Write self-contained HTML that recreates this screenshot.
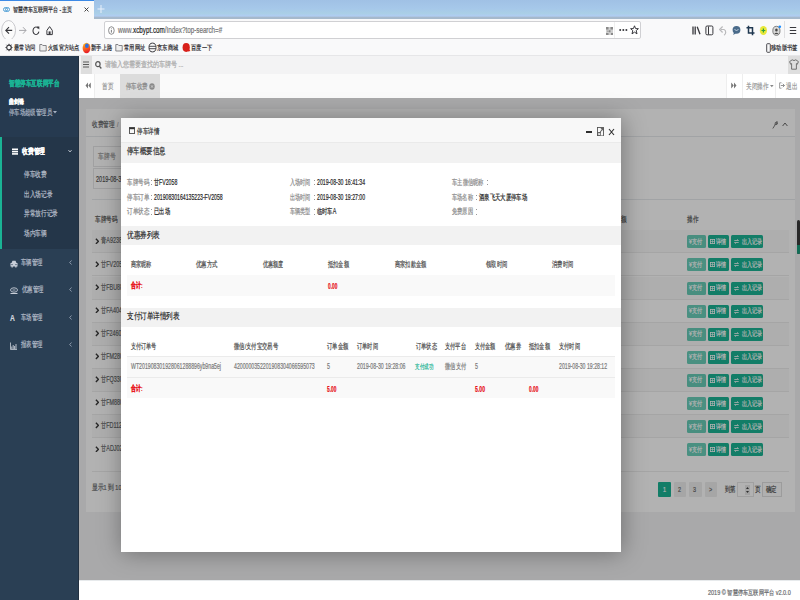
<!DOCTYPE html>
<html><head><meta charset="utf-8">
<style>
*{margin:0;padding:0;box-sizing:border-box}
html,body{width:800px;height:600px;overflow:hidden;background:#fff;font-family:"Liberation Sans",sans-serif}
.a{position:absolute}
.t{position:absolute;white-space:nowrap;-webkit-text-stroke:.2px currentColor;transform:scaleX(var(--s,.75));transform-origin:0 50%;line-height:12px;height:12px}
/* browser chrome */
#tabs{left:0;top:0;width:800px;height:18.6px;background:linear-gradient(#a0c1e5,#a6c8ea 45%,#aacfe6 70%,#b0cdf2 84%,#a6b9cc 92%,#a6b9cc)}
#tab{left:0;top:0;width:93.5px;height:18.6px;background:#f9f9fa;border-top:1px solid #3d8ae6}
#nav{left:0;top:18.6px;width:800px;height:20.4px;background:#f9f9fa}
#url{left:104px;top:21px;width:537px;height:18px;background:#fff;border:1px solid #d0d0d3;border-radius:2px}
#bm{left:0;top:39px;width:800px;height:16.7px;background:#f9f9fa;border-bottom:1px solid #e6e6e8}
/* app */
#side{left:0;top:55.7px;width:79.3px;height:545px;background:#2a3f54}
#sidehd{left:0;top:55.7px;width:79px;height:81.3px;background:#263a50}
#sideact{left:0;top:137px;width:79px;height:112px;background:#243649}
#sidebar-l{left:0;top:137px;width:2px;height:112px;background:#1ab394}
#hdr{left:79.3px;top:55.7px;width:720.7px;height:18.1px;background:#f3f3f4}
#ham{left:80.5px;top:55.7px;width:11.2px;height:18.1px;background:#dedede}
#shirt{left:788.3px;top:55.7px;width:11.7px;height:18.1px;background:#dedede}
#tabrow{left:79.3px;top:73.8px;width:720.7px;height:24.4px;background:#fafafa}
#content{left:79.3px;top:98px;width:720.7px;height:482px;background:#f3f3f4}
#panel{left:86px;top:109px;width:709px;height:403px;background:#fff}
#footer{left:79.3px;top:580px;width:720.7px;height:20px;background:#fff;border-top:1px solid #e7eaec}
#shade{left:79.3px;top:98px;width:720.7px;height:482px;background:rgba(0,0,0,.3)}
#modal{left:121px;top:118px;width:500px;height:434px;background:#fff;box-shadow:1px 1px 22px rgba(0,0,0,.35)}
</style></head><body>
<div class="a" id="tabs"></div>
<div class="a" id="tab"></div>
<svg class="a" style="left:3px;top:6px" width="7" height="7" viewBox="0 0 7 7"><circle cx="2.5" cy="3.5" r="2" fill="none" stroke="#4f9fd6" stroke-width="1"/><circle cx="4.5" cy="3.5" r="2" fill="none" stroke="#4f9fd6" stroke-width="1"/></svg>
<div class="t" style="left:13px;top:3.7px;font-size:6.9px;--s:.715;color:#2a2a2e">智慧停车互联网平台 - 主页</div>
<svg class="a" style="left:84px;top:7px" width="5" height="5" viewBox="0 0 5 5"><path d="M0.5 0.5L4.5 4.5M4.5 0.5L0.5 4.5" stroke="#333" stroke-width="0.9"/></svg>
<svg class="a" style="left:97px;top:4px" width="8" height="10" viewBox="0 0 8 10"><path d="M4 1V9M0.5 5H7.5" stroke="#e8f0fa" stroke-width="1"/></svg>
<div class="a" id="nav"></div>
<svg class="a" style="left:1px;top:20px" width="16" height="21" viewBox="0 0 16 21"><ellipse cx="7.6" cy="10.3" rx="6.9" ry="9.8" fill="#fbfbfb" stroke="#c2c2c6" stroke-width="0.9"/><path d="M4.8 10.4H11.2M8 7.2L4.8 10.4L8 13.7" fill="none" stroke="#38383d" stroke-width="1.1"/></svg>
<svg class="a" style="left:18px;top:25px" width="9" height="11" viewBox="0 0 9 11"><path d="M1 5.4H8M5 2.2L8 5.4L5 8.7" fill="none" stroke="#a6a6aa" stroke-width="1"/></svg>
<svg class="a" style="left:32px;top:25px" width="8" height="11" viewBox="0 0 8 11"><path d="M6.3 3.4A3 3.7 0 1 0 6.9 6.6" fill="none" stroke="#38383d" stroke-width="1.05"/><path d="M4.6 1.6L7.3 1.6L7.3 4.6Z" fill="#38383d"/></svg>
<svg class="a" style="left:45.5px;top:25px" width="8" height="11" viewBox="0 0 8 11"><path d="M0.9 5.4L3.6 1.6L6.3 5.4V9.6H0.9Z" fill="none" stroke="#38383d" stroke-width="1"/><rect x="2.6" y="6.4" width="2" height="3.2" fill="#38383d"/></svg>
<div class="a" id="url"></div>
<svg class="a" style="left:108px;top:26px" width="7" height="9" viewBox="0 0 7 9"><ellipse cx="3.4" cy="4.5" rx="2.8" ry="3.8" fill="none" stroke="#5b5b5f" stroke-width="0.7"/><path d="M3.4 3.8V6.6" stroke="#5b5b5f" stroke-width="0.8"/><circle cx="3.4" cy="2.6" r="0.45" fill="#5b5b5f"/></svg>
<div class="t" style="left:117.5px;top:24.2px;font-size:9.6px;--s:.655;color:#737373">www.<span style="color:#1b1b1b">xcbypt.com</span>/Index?top-search=#</div>
<svg class="a" style="left:605.5px;top:26.5px" width="7" height="8.5" viewBox="0 0 7 8.5"><rect x="0" y="0" width="7" height="8.5" fill="#cfcfcf"/><path d="M0 0h2.5v2.5h-2.5zM4.5 0h2.5v2.5h-2.5zM0 6h2.5v2.5h-2.5zM3 3.2h1.5v2h-1.5zM5 6h2v2.5h-2zM1.5 3.5h1v1.5h-1z" fill="#8a8a8a"/></svg>
<div class="a" style="left:614px;top:22px;width:1px;height:16px;background:#f0f0f0"></div>
<svg class="a" style="left:619px;top:28px" width="9" height="4" viewBox="0 0 9 4"><circle cx="1.2" cy="2" r="1" fill="#38383d"/><circle cx="4.3" cy="2" r="1" fill="#38383d"/><circle cx="7.4" cy="2" r="1" fill="#38383d"/></svg>
<svg class="a" style="left:630px;top:25px" width="9" height="10" viewBox="0 0 9 10"><path d="M4.5 0.8L5.6 3.6L8.4 3.7L6.2 5.6L7 8.9L4.5 7.1L2 8.9L2.8 5.6L0.6 3.7L3.4 3.6Z" fill="none" stroke="#38383d" stroke-width="1"/></svg>
<!-- right toolbar icons -->
<svg class="a" style="left:692px;top:25px" width="9" height="11" viewBox="0 0 9 11"><path d="M1 1.5V9.5M3.2 1.5V9.5M5.2 1.8L8 9.3" stroke="#38383d" stroke-width="1.3" fill="none"/></svg>
<svg class="a" style="left:705px;top:25px" width="9" height="11" viewBox="0 0 9 11"><rect x="0.9" y="1" width="7" height="8.8" rx="1.2" fill="none" stroke="#38383d" stroke-width="1"/><path d="M3.5 1.5V9.5" stroke="#38383d" stroke-width="1"/></svg>
<svg class="a" style="left:719px;top:25px" width="9" height="11" viewBox="0 0 9 11"><path d="M2 4.5H5A2.5 3 0 0 1 5 10.2" fill="none" stroke="#b9b9bb" stroke-width="1.2"/><path d="M3.6 1.5L0.6 4.5L3.6 7.5" fill="none" stroke="#b9b9bb" stroke-width="1.2"/></svg>
<svg class="a" style="left:732px;top:25px" width="9" height="11" viewBox="0 0 9 11"><ellipse cx="4.5" cy="4.8" rx="3.9" ry="3.9" fill="#4a6b8a"/><path d="M2 7.5L1.2 10L4 8.2Z" fill="#4a6b8a"/><path d="M2.5 4.5Q4.5 6.5 6.5 4.5" stroke="#d6e2ee" stroke-width="0.8" fill="none"/></svg>
<svg class="a" style="left:746px;top:25px" width="9" height="11" viewBox="0 0 9 11"><path d="M2.5 0.8V8H8.5M0.5 2.8H6.5V10.2" fill="none" stroke="#203850" stroke-width="1.5"/></svg>
<svg class="a" style="left:759px;top:25px" width="9" height="11" viewBox="0 0 9 11"><ellipse cx="4.4" cy="5.5" rx="3.6" ry="4.6" fill="#e8e83a"/><path d="M2.5 5.5H6.3M4.4 3.5V7.5" stroke="#2aa040" stroke-width="1.2"/></svg>
<svg class="a" style="left:772px;top:25px" width="10" height="11" viewBox="0 0 10 11"><ellipse cx="4.4" cy="5.8" rx="3.6" ry="4.5" fill="#d9d9d9" stroke="#6a6a6a" stroke-width="0.8"/><ellipse cx="4.4" cy="5" rx="1.3" ry="1.6" fill="#444"/><path d="M2.2 9Q4.4 6.5 6.6 9" fill="#444"/><circle cx="7.8" cy="1.8" r="1.3" fill="#1a8cff"/></svg>
<div class="a" style="left:784px;top:21px;width:1px;height:17px;background:#e0e0e2"></div>
<svg class="a" style="left:789px;top:25px" width="8" height="11" viewBox="0 0 8 11"><path d="M0.8 2.5H7.2M0.8 5.5H7.2M0.8 8.5H7.2" stroke="#38383d" stroke-width="1.1"/></svg>
<div class="a" id="bm"></div>
<svg class="a" style="left:5px;top:43px" width="8" height="9" viewBox="0 0 8 9"><circle cx="4" cy="4.5" r="2.3" fill="none" stroke="#38383d" stroke-width="1.2"/><path d="M4 0.8V2M4 7V8.2M0.5 4.5H1.6M6.4 4.5H7.5M1.5 1.8L2.3 2.6M5.7 6.4L6.5 7.2M6.5 1.8L5.7 2.6M2.3 6.4L1.5 7.2" stroke="#38383d" stroke-width="1"/></svg>
<div class="t" style="left:14px;top:42.3px;font-size:6.8px;color:#2a2a2e">最常访问</div>
<svg class="a" style="left:39px;top:43px" width="8" height="9" viewBox="0 0 8 9"><path d="M0.8 1.5H3L3.8 2.5H7.2V8H0.8Z" fill="#eee" stroke="#6a6a6e" stroke-width="0.8"/></svg>
<div class="t" style="left:48px;top:42.3px;font-size:6.8px;color:#2a2a2e">火狐官方站点</div>
<svg class="a" style="left:81.5px;top:41.5px" width="9" height="12" viewBox="0 0 9 12"><defs><linearGradient id="ff" x1="0" y1="0" x2="0.3" y2="1"><stop offset="0" stop-color="#ffcb2e"/><stop offset="0.45" stop-color="#ff7a1a"/><stop offset="1" stop-color="#e8202a"/></linearGradient></defs><ellipse cx="4.5" cy="6" rx="3.9" ry="5.3" fill="url(#ff)"/><ellipse cx="4.9" cy="3.8" rx="1.9" ry="2.3" fill="#2f6fe0"/></svg>
<div class="t" style="left:91px;top:42.3px;font-size:6.8px;color:#2a2a2e">新手上路</div>
<svg class="a" style="left:115px;top:43px" width="8" height="9" viewBox="0 0 8 9"><path d="M0.8 1.5H3L3.8 2.5H7.2V8H0.8Z" fill="#eee" stroke="#6a6a6e" stroke-width="0.8"/></svg>
<div class="t" style="left:124px;top:42.3px;font-size:6.8px;color:#2a2a2e">常用网址</div>
<svg class="a" style="left:148px;top:42px" width="9" height="11" viewBox="0 0 9 11"><ellipse cx="4.5" cy="5.5" rx="3.5" ry="4.4" fill="none" stroke="#38383d" stroke-width="1"/><path d="M1.2 4.3H7.8M1.2 6.7H7.8" stroke="#38383d" stroke-width="0.9"/></svg>
<div class="t" style="left:157px;top:42.3px;font-size:6.8px;color:#2a2a2e">京东商城</div>
<svg class="a" style="left:182px;top:42px" width="9" height="11" viewBox="0 0 9 11"><ellipse cx="4.2" cy="5.5" rx="3.6" ry="4.4" fill="#d8201a"/><path d="M5.5 5.5L8.5 9L6 9.5Z" fill="#d8201a"/></svg>
<div class="t" style="left:191px;top:42.3px;font-size:6.8px;color:#2a2a2e">百度一下</div>
<svg class="a" style="left:766px;top:43px" width="5" height="10" viewBox="0 0 5 10"><rect x="0.7" y="0.7" width="3.6" height="8.6" rx="0.8" fill="none" stroke="#38383d" stroke-width="0.9"/></svg>
<div class="t" style="left:771px;top:42.3px;font-size:6.8px;color:#2a2a2e">移动版书签</div>

<div class="a" id="side"></div>
<div class="a" id="sidehd"></div>
<div class="a" id="sideact"></div>
<div class="a" id="sidebar-l"></div>
<div class="a" style="left:78.4px;top:55.7px;width:0.9px;height:545px;background:#223040"></div>
<div class="t" style="left:8.7px;top:77px;font-size:8.4px;--s:.70;color:#1ab394;font-weight:bold">智慧停车互联网平台</div>
<div class="t" style="left:8.8px;top:96px;font-size:7.4px;--s:.7;color:#fff;font-weight:bold">曲剑锋</div>
<div class="t" style="left:9px;top:106.5px;font-size:7.6px;--s:.67;color:#aab4c2">停车场超级管理员</div>
<svg class="a" style="left:53.2px;top:111px" width="4" height="3" viewBox="0 0 4 3"><path d="M0 0H4L2 2.5Z" fill="#a7b1c2"/></svg>
<svg class="a" style="left:12px;top:148px" width="6" height="7" viewBox="0 0 6 7"><rect x="0" y="0.5" width="6" height="1.6" fill="#fff"/><rect x="0" y="2.8" width="6" height="1.6" fill="#fff"/><rect x="0" y="5.1" width="6" height="1.6" fill="#fff"/></svg>
<div class="t" style="left:22px;top:145.5px;font-size:7.6px;--s:.72;color:#fff;font-weight:bold">收费管理</div>
<svg class="a" style="left:68px;top:149px" width="4" height="4" viewBox="0 0 4 4"><path d="M0.4 1L2 3L3.6 1" fill="none" stroke="#d0d6de" stroke-width="0.8"/></svg>
<div class="t" style="left:24px;top:169px;font-size:7.6px;--s:.71;color:#b4bcc8">停车收费</div>
<div class="t" style="left:24px;top:189px;font-size:7.6px;--s:.71;color:#b4bcc8">出入场记录</div>
<div class="t" style="left:24px;top:208px;font-size:7.6px;--s:.71;color:#b4bcc8">异常放行记录</div>
<div class="t" style="left:24px;top:228px;font-size:7.6px;--s:.71;color:#b4bcc8">场内车辆</div>
<svg class="a" style="left:10px;top:260px" width="8" height="8" viewBox="0 0 8 8"><path d="M1.5 3L2.5 0.8H5.5L6.5 3H7.5V6.5H6.5V7.5H5.2V6.5H2.8V7.5H1.5V6.5H0.5V3Z" fill="#c8ced8"/><circle cx="2" cy="4.6" r="0.7" fill="#2c3f56"/><circle cx="6" cy="4.6" r="0.7" fill="#2c3f56"/></svg>
<div class="t" style="left:21px;top:257px;font-size:7.6px;--s:.67;color:#b4bcc8">车辆管理</div>
<svg class="a" style="left:69px;top:260px" width="3" height="5" viewBox="0 0 3 5"><path d="M2.5 0.5L0.7 2.5L2.5 4.5" fill="none" stroke="#a7b1c2" stroke-width="0.8"/></svg>
<svg class="a" style="left:10px;top:287px" width="8" height="8" viewBox="0 0 8 8"><ellipse cx="4" cy="3" rx="3.5" ry="2.2" fill="none" stroke="#c8ced8" stroke-width="0.9"/><path d="M0.5 6.5H7.5" stroke="#c8ced8" stroke-width="1"/><path d="M2.5 3H5.5" stroke="#c8ced8" stroke-width="0.8"/></svg>
<div class="t" style="left:22px;top:284px;font-size:7.6px;--s:.67;color:#b4bcc8">优惠管理</div>
<svg class="a" style="left:69px;top:287px" width="3" height="5" viewBox="0 0 3 5"><path d="M2.5 0.5L0.7 2.5L2.5 4.5" fill="none" stroke="#a7b1c2" stroke-width="0.8"/></svg>
<div class="t" style="left:10px;top:312px;font-size:8.4px;--s:.8;color:#d0d6de;font-weight:bold">A</div>
<div class="t" style="left:21px;top:312px;font-size:7.6px;--s:.67;color:#b4bcc8">车场管理</div>
<svg class="a" style="left:69px;top:315px" width="3" height="5" viewBox="0 0 3 5"><path d="M2.5 0.5L0.7 2.5L2.5 4.5" fill="none" stroke="#a7b1c2" stroke-width="0.8"/></svg>
<svg class="a" style="left:10px;top:342px" width="7" height="8" viewBox="0 0 7 8"><path d="M0.5 0.5V7.5H7" fill="none" stroke="#c8ced8" stroke-width="0.8"/><path d="M1.8 7V4.5M3.2 7V3M4.6 7V4M6 7V2" stroke="#c8ced8" stroke-width="0.9"/></svg>
<div class="t" style="left:21px;top:339px;font-size:7.6px;--s:.67;color:#b4bcc8">报表管理</div>
<svg class="a" style="left:69px;top:342px" width="3" height="5" viewBox="0 0 3 5"><path d="M2.5 0.5L0.7 2.5L2.5 4.5" fill="none" stroke="#a7b1c2" stroke-width="0.8"/></svg>
<div class="a" id="hdr"></div>
<div class="a" id="ham"></div>
<svg class="a" style="left:83px;top:61px" width="6" height="7" viewBox="0 0 6 7"><path d="M0 1H6M0 3.5H6M0 6H6" stroke="#5a5a5a" stroke-width="1.1"/></svg>
<svg class="a" style="left:95px;top:61px" width="7" height="8" viewBox="0 0 7 8"><ellipse cx="2.9" cy="3.2" rx="2.2" ry="2.5" fill="none" stroke="#555" stroke-width="1.2"/><path d="M4.4 5.2L6.3 7.5" stroke="#555" stroke-width="1.3"/></svg>
<div class="t" style="left:105px;top:59px;font-size:7.6px;color:#a9a9a9">请输入您需要查找的车牌号 ...</div>
<div class="a" id="shirt"></div>
<svg class="a" style="left:789px;top:59px" width="10" height="11" viewBox="0 0 10 11"><path d="M3.2 0.8L0.6 2.6L1.6 5.2L2.6 4.6V10.2H7.4V4.6L8.4 5.2L9.4 2.6L6.8 0.8Q5 2.4 3.2 0.8Z" fill="none" stroke="#555" stroke-width="0.8"/></svg>
<div class="a" id="tabrow"></div>
<div class="a" style="left:80px;top:74px;width:15px;height:24px;background:#fff;border-right:1px solid #eee"></div>
<svg class="a" style="left:84.5px;top:82px" width="6" height="7" viewBox="0 0 6 7"><path d="M3 0.5L0.5 3.5L3 6.5V0.5ZM5.8 0.5L3.3 3.5L5.8 6.5Z" fill="#777"/></svg>
<div class="t" style="left:102px;top:80.8px;font-size:7.6px;--s:.70;color:#999">首页</div>
<div class="a" style="left:120px;top:74px;width:40px;height:24px;background:#dcdcdc"></div>
<div class="t" style="left:126px;top:80.8px;font-size:7.6px;--s:.68;color:#888">停车收费</div>
<svg class="a" style="left:149.3px;top:82.6px" width="6" height="7" viewBox="0 0 6 7"><ellipse cx="3" cy="3.5" rx="2.7" ry="3.2" fill="#8a8a8a"/><path d="M2 2.3L4 4.7M4 2.3L2 4.7" stroke="#dcdcdc" stroke-width="0.7"/></svg>
<div class="a" style="left:726px;top:74px;width:16px;height:24px;background:#fff;border-left:1px solid #eee"></div>
<svg class="a" style="left:731px;top:82px" width="6" height="7" viewBox="0 0 6 7"><path d="M0.2 0.5L2.7 3.5L0.2 6.5ZM3 0.5L5.5 3.5L3 6.5Z" fill="#777"/></svg>
<div class="a" style="left:742px;top:74px;width:33px;height:24px;background:#fff;border-left:1px solid #eee"></div>
<div class="t" style="left:746px;top:80.8px;font-size:7.6px;--s:.70;color:#999">关闭操作</div>
<svg class="a" style="left:769.5px;top:85px" width="4" height="3" viewBox="0 0 4 3"><path d="M0 0H3.6L1.8 2.2Z" fill="#888"/></svg>
<div class="a" style="left:775px;top:74px;width:25px;height:24px;background:#fff;border-left:1px solid #eee"></div>
<svg class="a" style="left:779px;top:82px" width="6" height="7" viewBox="0 0 6 7"><path d="M2.5 0.8H0.6V6.2H2.5" fill="none" stroke="#888" stroke-width="0.8"/><path d="M1.8 3.5H5.5M3.8 1.8L5.5 3.5L3.8 5.2" fill="none" stroke="#888" stroke-width="0.9"/></svg>
<div class="t" style="left:786px;top:80.8px;font-size:7.6px;--s:.70;color:#999">退出</div>
<div class="a" id="content"></div>
<div class="a" id="panel"></div>
<div class="a" style="left:86px;top:135.5px;width:709px;height:1px;background:#e7eaec"></div>
<div class="t" style="left:92px;top:118.60px;font-size:7.6px;--s:0.7;color:#676a6c">收费管理</div>
<div class="t" style="left:117.3px;top:118.60px;font-size:7.6px;--s:0.7;color:#aaa">/</div>
<svg class="a" style="left:772px;top:120.5px" width="6" height="8" viewBox="0 0 6 8"><path d="M0.8 7.5L3.5 3.2M3 3.8Q2.6 1 5.2 0.6Q4 1.8 4.6 2.6Q5.4 2.2 5.6 1.6Q5.6 4 3.5 3.6" fill="none" stroke="#6a6a6a" stroke-width="0.9"/></svg>
<svg class="a" style="left:782px;top:122px" width="6" height="5" viewBox="0 0 6 5"><path d="M0.6 4L3 1L5.4 4" fill="none" stroke="#6a6a6a" stroke-width="1"/></svg>
<div class="a" style="left:92.5px;top:146px;width:100px;height:21px;background:#fff;border:1px solid #e5e6e7"></div>
<div class="t" style="left:98px;top:150.50px;font-size:7.6px;--s:0.72;color:#999">车牌号</div>
<div class="a" style="left:92.5px;top:168px;width:100px;height:20.5px;background:#fff;border:1px solid #e5e6e7"></div>
<div class="t" style="left:96px;top:172.80px;font-size:8.4px;--s:0.66;color:#555">2019-08-30</div>
<div class="a" style="left:92px;top:199.2px;width:702.5px;height:1px;background:#e7eaec"></div>
<div class="t" style="left:95px;top:214.20px;font-size:7.6px;--s:0.7;color:#555">车牌号码</div>
<div class="t" style="left:604px;top:214.20px;font-size:7.6px;--s:0.7;color:#555">优惠金额</div>
<div class="t" style="left:687px;top:214.20px;font-size:7.6px;--s:0.7;color:#555">操作</div>
<div class="a" style="left:92px;top:229.5px;width:697px;height:1px;background:#e9e9e9"></div>
<div class="a" style="left:92px;top:230.3px;width:697px;height:23.1px;background:#f9f9f9;border-bottom:1px solid #ececec"></div>
<svg class="a" style="left:94.6px;top:237.6px" width="4.5" height="6.6" viewBox="0 0 4.5 6.6"><path d="M0.9 0.7L3.4 3.3L0.9 5.9" fill="none" stroke="#3a3a3a" stroke-width="1.4"/></svg>
<div class="t" style="left:101.3px;top:235.40px;font-size:8.2px;--s:0.66;color:#676a6c">青A92388</div>
<div class="a" style="left:687.3px;top:235.3px;width:18.6px;height:13px;background:#1ab394;opacity:.65;border-radius:1.5px"></div>
<div class="t" style="left:689px;top:235.80px;font-size:7px;--s:0.72;color:#fff">¥支付</div>
<div class="a" style="left:707.9px;top:235.3px;width:21px;height:13px;background:#1ab394;border-radius:1.5px"></div>
<svg class="a" style="left:710px;top:239.3px" width="5" height="5" viewBox="0 0 5 5"><rect x="0.4" y="0.4" width="4.2" height="4.2" fill="none" stroke="#fff" stroke-width="0.8"/><path d="M0.4 2.5H4.6M2.5 0.4V4.6" stroke="#fff" stroke-width="0.6"/></svg>
<div class="t" style="left:715.5px;top:235.80px;font-size:7px;--s:0.72;color:#fff">详情</div>
<div class="a" style="left:730.8px;top:235.3px;width:32.2px;height:13px;background:#1ab394;border-radius:1.5px"></div>
<svg class="a" style="left:733.5px;top:239.3px" width="5" height="5" viewBox="0 0 5 5"><path d="M0.3 1.5H4.5M3.2 0.3L4.5 1.5M4.7 3.5H0.5M1.8 4.7L0.5 3.5" fill="none" stroke="#fff" stroke-width="0.8"/></svg>
<div class="t" style="left:742px;top:235.80px;font-size:7px;--s:0.72;color:#fff">出入记录</div>
<div class="a" style="left:92px;top:253.4px;width:697px;height:23.1px;background:#fff;border-bottom:1px solid #ececec"></div>
<svg class="a" style="left:94.6px;top:260.7px" width="4.5" height="6.6" viewBox="0 0 4.5 6.6"><path d="M0.9 0.7L3.4 3.3L0.9 5.9" fill="none" stroke="#3a3a3a" stroke-width="1.4"/></svg>
<div class="t" style="left:101.3px;top:258.50px;font-size:8.2px;--s:0.66;color:#676a6c">甘FV2058</div>
<div class="a" style="left:687.3px;top:258.4px;width:18.6px;height:13px;background:#1ab394;opacity:.65;border-radius:1.5px"></div>
<div class="t" style="left:689px;top:258.90px;font-size:7px;--s:0.72;color:#fff">¥支付</div>
<div class="a" style="left:707.9px;top:258.4px;width:21px;height:13px;background:#1ab394;border-radius:1.5px"></div>
<svg class="a" style="left:710px;top:262.4px" width="5" height="5" viewBox="0 0 5 5"><rect x="0.4" y="0.4" width="4.2" height="4.2" fill="none" stroke="#fff" stroke-width="0.8"/><path d="M0.4 2.5H4.6M2.5 0.4V4.6" stroke="#fff" stroke-width="0.6"/></svg>
<div class="t" style="left:715.5px;top:258.90px;font-size:7px;--s:0.72;color:#fff">详情</div>
<div class="a" style="left:730.8px;top:258.4px;width:32.2px;height:13px;background:#1ab394;border-radius:1.5px"></div>
<svg class="a" style="left:733.5px;top:262.4px" width="5" height="5" viewBox="0 0 5 5"><path d="M0.3 1.5H4.5M3.2 0.3L4.5 1.5M4.7 3.5H0.5M1.8 4.7L0.5 3.5" fill="none" stroke="#fff" stroke-width="0.8"/></svg>
<div class="t" style="left:742px;top:258.90px;font-size:7px;--s:0.72;color:#fff">出入记录</div>
<div class="a" style="left:92px;top:276.5px;width:697px;height:23.1px;background:#f9f9f9;border-bottom:1px solid #ececec"></div>
<svg class="a" style="left:94.6px;top:283.8px" width="4.5" height="6.6" viewBox="0 0 4.5 6.6"><path d="M0.9 0.7L3.4 3.3L0.9 5.9" fill="none" stroke="#3a3a3a" stroke-width="1.4"/></svg>
<div class="t" style="left:101.3px;top:281.60px;font-size:8.2px;--s:0.66;color:#676a6c">甘FBU888</div>
<div class="a" style="left:687.3px;top:281.5px;width:18.6px;height:13px;background:#1ab394;opacity:.65;border-radius:1.5px"></div>
<div class="t" style="left:689px;top:282.00px;font-size:7px;--s:0.72;color:#fff">¥支付</div>
<div class="a" style="left:707.9px;top:281.5px;width:21px;height:13px;background:#1ab394;border-radius:1.5px"></div>
<svg class="a" style="left:710px;top:285.5px" width="5" height="5" viewBox="0 0 5 5"><rect x="0.4" y="0.4" width="4.2" height="4.2" fill="none" stroke="#fff" stroke-width="0.8"/><path d="M0.4 2.5H4.6M2.5 0.4V4.6" stroke="#fff" stroke-width="0.6"/></svg>
<div class="t" style="left:715.5px;top:282.00px;font-size:7px;--s:0.72;color:#fff">详情</div>
<div class="a" style="left:730.8px;top:281.5px;width:32.2px;height:13px;background:#1ab394;border-radius:1.5px"></div>
<svg class="a" style="left:733.5px;top:285.5px" width="5" height="5" viewBox="0 0 5 5"><path d="M0.3 1.5H4.5M3.2 0.3L4.5 1.5M4.7 3.5H0.5M1.8 4.7L0.5 3.5" fill="none" stroke="#fff" stroke-width="0.8"/></svg>
<div class="t" style="left:742px;top:282.00px;font-size:7px;--s:0.72;color:#fff">出入记录</div>
<div class="a" style="left:92px;top:299.6px;width:697px;height:23.1px;background:#fff;border-bottom:1px solid #ececec"></div>
<svg class="a" style="left:94.6px;top:306.9px" width="4.5" height="6.6" viewBox="0 0 4.5 6.6"><path d="M0.9 0.7L3.4 3.3L0.9 5.9" fill="none" stroke="#3a3a3a" stroke-width="1.4"/></svg>
<div class="t" style="left:101.3px;top:304.70px;font-size:8.2px;--s:0.66;color:#676a6c">甘FA4040</div>
<div class="a" style="left:687.3px;top:304.6px;width:18.6px;height:13px;background:#1ab394;opacity:.65;border-radius:1.5px"></div>
<div class="t" style="left:689px;top:305.10px;font-size:7px;--s:0.72;color:#fff">¥支付</div>
<div class="a" style="left:707.9px;top:304.6px;width:21px;height:13px;background:#1ab394;border-radius:1.5px"></div>
<svg class="a" style="left:710px;top:308.6px" width="5" height="5" viewBox="0 0 5 5"><rect x="0.4" y="0.4" width="4.2" height="4.2" fill="none" stroke="#fff" stroke-width="0.8"/><path d="M0.4 2.5H4.6M2.5 0.4V4.6" stroke="#fff" stroke-width="0.6"/></svg>
<div class="t" style="left:715.5px;top:305.10px;font-size:7px;--s:0.72;color:#fff">详情</div>
<div class="a" style="left:730.8px;top:304.6px;width:32.2px;height:13px;background:#1ab394;border-radius:1.5px"></div>
<svg class="a" style="left:733.5px;top:308.6px" width="5" height="5" viewBox="0 0 5 5"><path d="M0.3 1.5H4.5M3.2 0.3L4.5 1.5M4.7 3.5H0.5M1.8 4.7L0.5 3.5" fill="none" stroke="#fff" stroke-width="0.8"/></svg>
<div class="t" style="left:742px;top:305.10px;font-size:7px;--s:0.72;color:#fff">出入记录</div>
<div class="a" style="left:92px;top:322.7px;width:697px;height:23.1px;background:#f9f9f9;border-bottom:1px solid #ececec"></div>
<svg class="a" style="left:94.6px;top:330.0px" width="4.5" height="6.6" viewBox="0 0 4.5 6.6"><path d="M0.9 0.7L3.4 3.3L0.9 5.9" fill="none" stroke="#3a3a3a" stroke-width="1.4"/></svg>
<div class="t" style="left:101.3px;top:327.80px;font-size:8.2px;--s:0.66;color:#676a6c">甘F24600</div>
<div class="a" style="left:687.3px;top:327.7px;width:18.6px;height:13px;background:#1ab394;opacity:.65;border-radius:1.5px"></div>
<div class="t" style="left:689px;top:328.20px;font-size:7px;--s:0.72;color:#fff">¥支付</div>
<div class="a" style="left:707.9px;top:327.7px;width:21px;height:13px;background:#1ab394;border-radius:1.5px"></div>
<svg class="a" style="left:710px;top:331.7px" width="5" height="5" viewBox="0 0 5 5"><rect x="0.4" y="0.4" width="4.2" height="4.2" fill="none" stroke="#fff" stroke-width="0.8"/><path d="M0.4 2.5H4.6M2.5 0.4V4.6" stroke="#fff" stroke-width="0.6"/></svg>
<div class="t" style="left:715.5px;top:328.20px;font-size:7px;--s:0.72;color:#fff">详情</div>
<div class="a" style="left:730.8px;top:327.7px;width:32.2px;height:13px;background:#1ab394;border-radius:1.5px"></div>
<svg class="a" style="left:733.5px;top:331.7px" width="5" height="5" viewBox="0 0 5 5"><path d="M0.3 1.5H4.5M3.2 0.3L4.5 1.5M4.7 3.5H0.5M1.8 4.7L0.5 3.5" fill="none" stroke="#fff" stroke-width="0.8"/></svg>
<div class="t" style="left:742px;top:328.20px;font-size:7px;--s:0.72;color:#fff">出入记录</div>
<div class="a" style="left:92px;top:345.8px;width:697px;height:23.1px;background:#fff;border-bottom:1px solid #ececec"></div>
<svg class="a" style="left:94.6px;top:353.1px" width="4.5" height="6.6" viewBox="0 0 4.5 6.6"><path d="M0.9 0.7L3.4 3.3L0.9 5.9" fill="none" stroke="#3a3a3a" stroke-width="1.4"/></svg>
<div class="t" style="left:101.3px;top:350.90px;font-size:8.2px;--s:0.66;color:#676a6c">甘FM2800</div>
<div class="a" style="left:687.3px;top:350.8px;width:18.6px;height:13px;background:#1ab394;opacity:.65;border-radius:1.5px"></div>
<div class="t" style="left:689px;top:351.30px;font-size:7px;--s:0.72;color:#fff">¥支付</div>
<div class="a" style="left:707.9px;top:350.8px;width:21px;height:13px;background:#1ab394;border-radius:1.5px"></div>
<svg class="a" style="left:710px;top:354.8px" width="5" height="5" viewBox="0 0 5 5"><rect x="0.4" y="0.4" width="4.2" height="4.2" fill="none" stroke="#fff" stroke-width="0.8"/><path d="M0.4 2.5H4.6M2.5 0.4V4.6" stroke="#fff" stroke-width="0.6"/></svg>
<div class="t" style="left:715.5px;top:351.30px;font-size:7px;--s:0.72;color:#fff">详情</div>
<div class="a" style="left:730.8px;top:350.8px;width:32.2px;height:13px;background:#1ab394;border-radius:1.5px"></div>
<svg class="a" style="left:733.5px;top:354.8px" width="5" height="5" viewBox="0 0 5 5"><path d="M0.3 1.5H4.5M3.2 0.3L4.5 1.5M4.7 3.5H0.5M1.8 4.7L0.5 3.5" fill="none" stroke="#fff" stroke-width="0.8"/></svg>
<div class="t" style="left:742px;top:351.30px;font-size:7px;--s:0.72;color:#fff">出入记录</div>
<div class="a" style="left:92px;top:368.9px;width:697px;height:23.1px;background:#f9f9f9;border-bottom:1px solid #ececec"></div>
<svg class="a" style="left:94.6px;top:376.2px" width="4.5" height="6.6" viewBox="0 0 4.5 6.6"><path d="M0.9 0.7L3.4 3.3L0.9 5.9" fill="none" stroke="#3a3a3a" stroke-width="1.4"/></svg>
<div class="t" style="left:101.3px;top:374.00px;font-size:8.2px;--s:0.66;color:#676a6c">甘FQ3300</div>
<div class="a" style="left:687.3px;top:373.9px;width:18.6px;height:13px;background:#1ab394;opacity:.65;border-radius:1.5px"></div>
<div class="t" style="left:689px;top:374.40px;font-size:7px;--s:0.72;color:#fff">¥支付</div>
<div class="a" style="left:707.9px;top:373.9px;width:21px;height:13px;background:#1ab394;border-radius:1.5px"></div>
<svg class="a" style="left:710px;top:377.9px" width="5" height="5" viewBox="0 0 5 5"><rect x="0.4" y="0.4" width="4.2" height="4.2" fill="none" stroke="#fff" stroke-width="0.8"/><path d="M0.4 2.5H4.6M2.5 0.4V4.6" stroke="#fff" stroke-width="0.6"/></svg>
<div class="t" style="left:715.5px;top:374.40px;font-size:7px;--s:0.72;color:#fff">详情</div>
<div class="a" style="left:730.8px;top:373.9px;width:32.2px;height:13px;background:#1ab394;border-radius:1.5px"></div>
<svg class="a" style="left:733.5px;top:377.9px" width="5" height="5" viewBox="0 0 5 5"><path d="M0.3 1.5H4.5M3.2 0.3L4.5 1.5M4.7 3.5H0.5M1.8 4.7L0.5 3.5" fill="none" stroke="#fff" stroke-width="0.8"/></svg>
<div class="t" style="left:742px;top:374.40px;font-size:7px;--s:0.72;color:#fff">出入记录</div>
<div class="a" style="left:92px;top:392.0px;width:697px;height:23.1px;background:#fff;border-bottom:1px solid #ececec"></div>
<svg class="a" style="left:94.6px;top:399.3px" width="4.5" height="6.6" viewBox="0 0 4.5 6.6"><path d="M0.9 0.7L3.4 3.3L0.9 5.9" fill="none" stroke="#3a3a3a" stroke-width="1.4"/></svg>
<div class="t" style="left:101.3px;top:397.10px;font-size:8.2px;--s:0.66;color:#676a6c">甘FM8800</div>
<div class="a" style="left:687.3px;top:397.0px;width:18.6px;height:13px;background:#1ab394;opacity:.65;border-radius:1.5px"></div>
<div class="t" style="left:689px;top:397.50px;font-size:7px;--s:0.72;color:#fff">¥支付</div>
<div class="a" style="left:707.9px;top:397.0px;width:21px;height:13px;background:#1ab394;border-radius:1.5px"></div>
<svg class="a" style="left:710px;top:401.0px" width="5" height="5" viewBox="0 0 5 5"><rect x="0.4" y="0.4" width="4.2" height="4.2" fill="none" stroke="#fff" stroke-width="0.8"/><path d="M0.4 2.5H4.6M2.5 0.4V4.6" stroke="#fff" stroke-width="0.6"/></svg>
<div class="t" style="left:715.5px;top:397.50px;font-size:7px;--s:0.72;color:#fff">详情</div>
<div class="a" style="left:730.8px;top:397.0px;width:32.2px;height:13px;background:#1ab394;border-radius:1.5px"></div>
<svg class="a" style="left:733.5px;top:401.0px" width="5" height="5" viewBox="0 0 5 5"><path d="M0.3 1.5H4.5M3.2 0.3L4.5 1.5M4.7 3.5H0.5M1.8 4.7L0.5 3.5" fill="none" stroke="#fff" stroke-width="0.8"/></svg>
<div class="t" style="left:742px;top:397.50px;font-size:7px;--s:0.72;color:#fff">出入记录</div>
<div class="a" style="left:92px;top:415.1px;width:697px;height:23.1px;background:#f9f9f9;border-bottom:1px solid #ececec"></div>
<svg class="a" style="left:94.6px;top:422.4px" width="4.5" height="6.6" viewBox="0 0 4.5 6.6"><path d="M0.9 0.7L3.4 3.3L0.9 5.9" fill="none" stroke="#3a3a3a" stroke-width="1.4"/></svg>
<div class="t" style="left:101.3px;top:420.20px;font-size:8.2px;--s:0.66;color:#676a6c">甘FD1120</div>
<div class="a" style="left:687.3px;top:420.1px;width:18.6px;height:13px;background:#1ab394;opacity:.65;border-radius:1.5px"></div>
<div class="t" style="left:689px;top:420.60px;font-size:7px;--s:0.72;color:#fff">¥支付</div>
<div class="a" style="left:707.9px;top:420.1px;width:21px;height:13px;background:#1ab394;border-radius:1.5px"></div>
<svg class="a" style="left:710px;top:424.1px" width="5" height="5" viewBox="0 0 5 5"><rect x="0.4" y="0.4" width="4.2" height="4.2" fill="none" stroke="#fff" stroke-width="0.8"/><path d="M0.4 2.5H4.6M2.5 0.4V4.6" stroke="#fff" stroke-width="0.6"/></svg>
<div class="t" style="left:715.5px;top:420.60px;font-size:7px;--s:0.72;color:#fff">详情</div>
<div class="a" style="left:730.8px;top:420.1px;width:32.2px;height:13px;background:#1ab394;border-radius:1.5px"></div>
<svg class="a" style="left:733.5px;top:424.1px" width="5" height="5" viewBox="0 0 5 5"><path d="M0.3 1.5H4.5M3.2 0.3L4.5 1.5M4.7 3.5H0.5M1.8 4.7L0.5 3.5" fill="none" stroke="#fff" stroke-width="0.8"/></svg>
<div class="t" style="left:742px;top:420.60px;font-size:7px;--s:0.72;color:#fff">出入记录</div>
<div class="a" style="left:92px;top:438.2px;width:697px;height:34.3px;background:#fff;border-bottom:1px solid #ececec"></div>
<svg class="a" style="left:94.6px;top:445.5px" width="4.5" height="6.6" viewBox="0 0 4.5 6.6"><path d="M0.9 0.7L3.4 3.3L0.9 5.9" fill="none" stroke="#3a3a3a" stroke-width="1.4"/></svg>
<div class="t" style="left:101.3px;top:443.30px;font-size:8.2px;--s:0.66;color:#676a6c">甘ADJ020</div>
<div class="a" style="left:687.3px;top:443.2px;width:18.6px;height:13px;background:#1ab394;opacity:.65;border-radius:1.5px"></div>
<div class="t" style="left:689px;top:443.70px;font-size:7px;--s:0.72;color:#fff">¥支付</div>
<div class="a" style="left:707.9px;top:443.2px;width:21px;height:13px;background:#1ab394;border-radius:1.5px"></div>
<svg class="a" style="left:710px;top:447.2px" width="5" height="5" viewBox="0 0 5 5"><rect x="0.4" y="0.4" width="4.2" height="4.2" fill="none" stroke="#fff" stroke-width="0.8"/><path d="M0.4 2.5H4.6M2.5 0.4V4.6" stroke="#fff" stroke-width="0.6"/></svg>
<div class="t" style="left:715.5px;top:443.70px;font-size:7px;--s:0.72;color:#fff">详情</div>
<div class="a" style="left:730.8px;top:443.2px;width:32.2px;height:13px;background:#1ab394;border-radius:1.5px"></div>
<svg class="a" style="left:733.5px;top:447.2px" width="5" height="5" viewBox="0 0 5 5"><path d="M0.3 1.5H4.5M3.2 0.3L4.5 1.5M4.7 3.5H0.5M1.8 4.7L0.5 3.5" fill="none" stroke="#fff" stroke-width="0.8"/></svg>
<div class="t" style="left:742px;top:443.70px;font-size:7px;--s:0.72;color:#fff">出入记录</div>
<div class="t" style="left:92px;top:482.30px;font-size:7.6px;--s:0.72;color:#676a6c">显示1 到 10</div>
<div class="a" style="left:658px;top:481.6px;width:13px;height:15.4px;background:#1ab394;border-radius:1px"></div>
<div class="t" style="left:662.6px;top:484.20px;font-size:7.8px;--s:0.7;color:#fff">1</div>
<div class="a" style="left:674px;top:481.6px;width:12.4px;height:15.4px;background:#eee;border-radius:1px"></div>
<div class="t" style="left:678.3px;top:484.20px;font-size:7.8px;--s:0.7;color:#666">2</div>
<div class="a" style="left:689px;top:481.6px;width:12.6px;height:15.4px;background:#eee;border-radius:1px"></div>
<div class="t" style="left:693.3px;top:484.20px;font-size:7.8px;--s:0.7;color:#666">3</div>
<div class="a" style="left:704.6px;top:481.6px;width:12.4px;height:15.4px;background:#eee;border-radius:1px"></div>
<div class="t" style="left:708.9px;top:484.20px;font-size:7.8px;--s:0.7;color:#666">&gt;</div>
<div class="t" style="left:725px;top:484.00px;font-size:7.6px;--s:0.66;color:#555">到第</div>
<div class="a" style="left:737px;top:482px;width:16.6px;height:14.5px;background:#fff;border:1px solid #e5e5e5"></div>
<svg class="a" style="left:745px;top:484.5px" width="5" height="10" viewBox="0 0 5 10"><rect x="0" y="0" width="5" height="10" fill="#e8e8e8"/><path d="M1 4L2.5 2L4 4ZM1 6L2.5 8L4 6Z" fill="#444"/></svg>
<div class="t" style="left:755.4px;top:484.00px;font-size:7.6px;--s:0.7;color:#555">页</div>
<div class="a" style="left:762.4px;top:482px;width:19.2px;height:15px;background:#fcfcfc;border:1px solid #e0e0e0"></div>
<div class="t" style="left:766px;top:484.00px;font-size:7.6px;--s:0.68;color:#555">确定</div>
<div class="a" style="left:796.5px;top:219.6px;width:3.5px;height:34.4px;background:#3a3a3a;border-radius:1.7px;overflow:hidden"><div class="a" style="left:0;top:25.4px;width:3.5px;height:9px;background:#1a9c7c"></div></div>
<div class="a" id="footer"></div>
<div class="t" style="left:708px;top:586.60px;font-size:7.4px;--s:0.7438;color:#676a6c">2019 © 智慧停车互联网平台 v2.0.0</div>
<div class="a" id="shade"></div>
<div class="a" id="modal"></div>
<div class="a" style="left:121px;top:118px;width:500px;height:25px;background:#f8f8f8;border-bottom:1px solid #eaeaea"></div>
<svg class="a" style="left:128.5px;top:127px" width="6" height="7" viewBox="0 0 6 7"><rect x="0.4" y="0.6" width="5.2" height="5.8" fill="none" stroke="#333" stroke-width="0.8"/><rect x="0.4" y="0.6" width="5.2" height="1.6" fill="#333"/></svg>
<div class="t" style="left:137px;top:126.20px;font-size:7.6px;--s:0.6875;color:#333">停车详情</div>
<div class="a" style="left:585.9px;top:130.9px;width:6.6px;height:1.7px;background:#2e2e2e"></div>
<svg class="a" style="left:596.8px;top:126.8px" width="7" height="9.4" viewBox="0 0 7 9.4"><rect x="0.45" y="0.45" width="6.1" height="8.5" fill="none" stroke="#555" stroke-width="0.9"/><rect x="0.9" y="5.6" width="2.4" height="2.9" fill="none" stroke="#555" stroke-width="0.8"/><path d="M2.6 6.2L5.6 1.6M3.8 1.4H5.8V3.4" fill="none" stroke="#444" stroke-width="0.9"/></svg>
<svg class="a" style="left:607.5px;top:127.5px" width="7" height="8" viewBox="0 0 7 8"><path d="M1 1L6 7M6 1L1 7" stroke="#333" stroke-width="1.15"/></svg>
<div class="a" style="left:121px;top:143px;width:500px;height:19.6px;background:#f2f2f2"></div>
<div class="t" style="left:127.3px;top:145.40px;font-size:9.2px;--s:0.7111;color:#2a2a2a">停车概要信息</div>
<div class="a" style="left:121px;top:225.5px;width:500px;height:19.3px;background:#f2f2f2"></div>
<div class="t" style="left:127.3px;top:229.00px;font-size:9.2px;--s:0.7311;color:#2a2a2a">优惠券列表</div>
<div class="a" style="left:121px;top:307.5px;width:500px;height:19.0px;background:#f2f2f2"></div>
<div class="t" style="left:127.3px;top:310.20px;font-size:9.2px;--s:0.7306;color:#2a2a2a">支付订单详情列表</div>
<div class="t" style="left:127px;top:176.60px;font-size:7.6px;--s:0.6906;color:#8a8a8a">车牌号码</div>
<div class="a" style="left:150.9px;top:180.0px;width:1.1px;height:1.1px;background:#999"></div><div class="a" style="left:150.9px;top:184.2px;width:1.1px;height:1.1px;background:#999"></div>
<div class="t" style="left:154px;top:176.60px;font-size:8.2px;--s:0.6351;color:#262626">甘FV2058</div>
<div class="t" style="left:127px;top:191.50px;font-size:7.6px;--s:0.6906;color:#8a8a8a">停车订单</div>
<div class="a" style="left:150.9px;top:194.9px;width:1.1px;height:1.1px;background:#999"></div><div class="a" style="left:150.9px;top:199.1px;width:1.1px;height:1.1px;background:#999"></div>
<div class="t" style="left:154px;top:191.50px;font-size:8.2px;--s:0.6314;color:#262626">20190830164135223-FV2058</div>
<div class="t" style="left:127px;top:206.00px;font-size:7.6px;--s:0.6906;color:#8a8a8a">订单状态</div>
<div class="a" style="left:150.9px;top:209.4px;width:1.1px;height:1.1px;background:#999"></div><div class="a" style="left:150.9px;top:213.6px;width:1.1px;height:1.1px;background:#999"></div>
<div class="t" style="left:154px;top:206.00px;font-size:8.2px;--s:0.6583;color:#262626">已出场</div>
<div class="t" style="left:289.5px;top:176.60px;font-size:7.6px;--s:0.6375;color:#8a8a8a">入场时间</div>
<div class="a" style="left:313.9px;top:180.0px;width:1.1px;height:1.1px;background:#999"></div><div class="a" style="left:313.9px;top:184.2px;width:1.1px;height:1.1px;background:#999"></div>
<div class="t" style="left:316.7px;top:176.60px;font-size:8.2px;--s:0.6326;color:#262626">2019-08-30 16:41:34</div>
<div class="t" style="left:289.5px;top:191.50px;font-size:7.6px;--s:0.6375;color:#8a8a8a">出场时间</div>
<div class="a" style="left:313.9px;top:194.9px;width:1.1px;height:1.1px;background:#999"></div><div class="a" style="left:313.9px;top:199.1px;width:1.1px;height:1.1px;background:#999"></div>
<div class="t" style="left:316.7px;top:191.50px;font-size:8.2px;--s:0.6326;color:#262626">2019-08-30 19:27:00</div>
<div class="t" style="left:289.5px;top:206.00px;font-size:7.6px;--s:0.6375;color:#8a8a8a">车辆类型</div>
<div class="a" style="left:313.9px;top:209.4px;width:1.1px;height:1.1px;background:#999"></div><div class="a" style="left:313.9px;top:213.6px;width:1.1px;height:1.1px;background:#999"></div>
<div class="t" style="left:316.7px;top:206.00px;font-size:8.2px;--s:0.6549;color:#262626">临时车A</div>
<div class="t" style="left:452px;top:176.60px;font-size:7.6px;--s:0.6604;color:#8a8a8a">车主微信昵称</div>
<div class="a" style="left:486.9px;top:180.0px;width:1.1px;height:1.1px;background:#999"></div><div class="a" style="left:486.9px;top:184.2px;width:1.1px;height:1.1px;background:#999"></div>
<div class="t" style="left:452px;top:191.50px;font-size:7.6px;--s:0.65;color:#8a8a8a">车场名称</div>
<div class="a" style="left:475.9px;top:194.9px;width:1.1px;height:1.1px;background:#999"></div><div class="a" style="left:475.9px;top:199.1px;width:1.1px;height:1.1px;background:#999"></div>
<div class="t" style="left:479px;top:191.50px;font-size:8.2px;--s:0.6667;color:#262626">酒泉飞天大厦停车场</div>
<div class="t" style="left:452px;top:206.00px;font-size:7.6px;--s:0.65;color:#8a8a8a">免费原因</div>
<div class="a" style="left:475.9px;top:209.4px;width:1.1px;height:1.1px;background:#999"></div><div class="a" style="left:475.9px;top:213.6px;width:1.1px;height:1.1px;background:#999"></div>
<div class="t" style="left:130.5px;top:258.80px;font-size:7.6px;--s:0.6406;color:#4a4a4a">商家昵称</div>
<div class="t" style="left:196px;top:258.80px;font-size:7.6px;--s:0.6625;color:#4a4a4a">优惠方式</div>
<div class="t" style="left:262.7px;top:258.80px;font-size:7.6px;--s:0.625;color:#4a4a4a">优惠额度</div>
<div class="t" style="left:328.2px;top:258.80px;font-size:7.6px;--s:0.65;color:#4a4a4a">抵扣金额</div>
<div class="t" style="left:394.7px;top:258.80px;font-size:7.6px;--s:0.6562;color:#4a4a4a">商家扣款金额</div>
<div class="t" style="left:486px;top:258.80px;font-size:7.6px;--s:0.6625;color:#4a4a4a">领取时间</div>
<div class="t" style="left:551.7px;top:258.80px;font-size:7.6px;--s:0.6563;color:#4a4a4a">消费时间</div>
<div class="a" style="left:127px;top:275px;width:487.5px;height:21px;background:#f9f9f9"></div>
<div class="t" style="left:130.5px;top:280.00px;font-size:7.8px;--s:0.618;color:#e8141c;font-weight:bold">合计:</div>
<div class="t" style="left:328.2px;top:280.00px;font-size:8.4px;--s:0.5824;color:#e8141c;font-weight:bold">0.00</div>
<div class="t" style="left:130.7px;top:340.80px;font-size:7.6px;--s:0.6375;color:#4a4a4a">支付订单号</div>
<div class="t" style="left:233.5px;top:340.80px;font-size:7.6px;--s:0.6654;color:#4a4a4a">微信/支付宝交易号</div>
<div class="t" style="left:326.8px;top:340.80px;font-size:7.6px;--s:0.6625;color:#4a4a4a">订单金额</div>
<div class="t" style="left:356.5px;top:340.80px;font-size:7.6px;--s:0.6469;color:#4a4a4a">订单时间</div>
<div class="t" style="left:415.5px;top:340.80px;font-size:7.6px;--s:0.6469;color:#4a4a4a">订单状态</div>
<div class="t" style="left:445.2px;top:340.80px;font-size:7.6px;--s:0.6562;color:#4a4a4a">支付平台</div>
<div class="t" style="left:475.2px;top:340.80px;font-size:7.6px;--s:0.6438;color:#4a4a4a">支付金额</div>
<div class="t" style="left:504.8px;top:340.80px;font-size:7.6px;--s:0.6625;color:#4a4a4a">优惠券</div>
<div class="t" style="left:529.2px;top:340.80px;font-size:7.6px;--s:0.65;color:#4a4a4a">抵扣金额</div>
<div class="t" style="left:559.2px;top:340.80px;font-size:7.6px;--s:0.65;color:#4a4a4a">支付时间</div>
<div class="a" style="left:127px;top:356px;width:487.7px;height:21.5px;background:#f9f9f9;border-top:1px solid #ebebeb"></div>
<div class="t" style="left:130.7px;top:361.30px;font-size:8.2px;--s:0.6356;color:#7a7a7a">WT201908301928061288896yb9na5ej</div>
<div class="t" style="left:233.5px;top:361.30px;font-size:8.2px;--s:0.6333;color:#7a7a7a">4200000352201908304066595073</div>
<div class="t" style="left:326.8px;top:361.30px;font-size:8.2px;--s:0.65;color:#7a7a7a">5</div>
<div class="t" style="left:356.5px;top:361.30px;font-size:8.2px;--s:0.6379;color:#7a7a7a">2019-08-30 19:28:06</div>
<div class="t" style="left:415.2px;top:361.30px;font-size:6.9px;--s:0.6429;color:#1ab394">支付成功</div>
<div class="t" style="left:445.2px;top:361.30px;font-size:7.6px;--s:0.6563;color:#7a7a7a">微信支付</div>
<div class="t" style="left:475.2px;top:361.30px;font-size:8.2px;--s:0.65;color:#7a7a7a">5</div>
<div class="t" style="left:559.2px;top:361.30px;font-size:8.2px;--s:0.6326;color:#7a7a7a">2019-08-30 19:28:12</div>
<div class="a" style="left:127px;top:377px;width:487.7px;height:21px;background:#f9f9f9;border-top:1px solid #ebebeb"></div>
<div class="t" style="left:130.7px;top:382.80px;font-size:7.8px;--s:0.618;color:#e8141c;font-weight:bold">合计:</div>
<div class="t" style="left:326.8px;top:382.80px;font-size:8.4px;--s:0.5824;color:#e8141c;font-weight:bold">5.00</div>
<div class="t" style="left:474.9px;top:382.80px;font-size:8.4px;--s:0.613;color:#e8141c;font-weight:bold">5.00</div>
<div class="t" style="left:529.4px;top:382.80px;font-size:8.4px;--s:0.5824;color:#e8141c;font-weight:bold">0.00</div>
</body></html>
